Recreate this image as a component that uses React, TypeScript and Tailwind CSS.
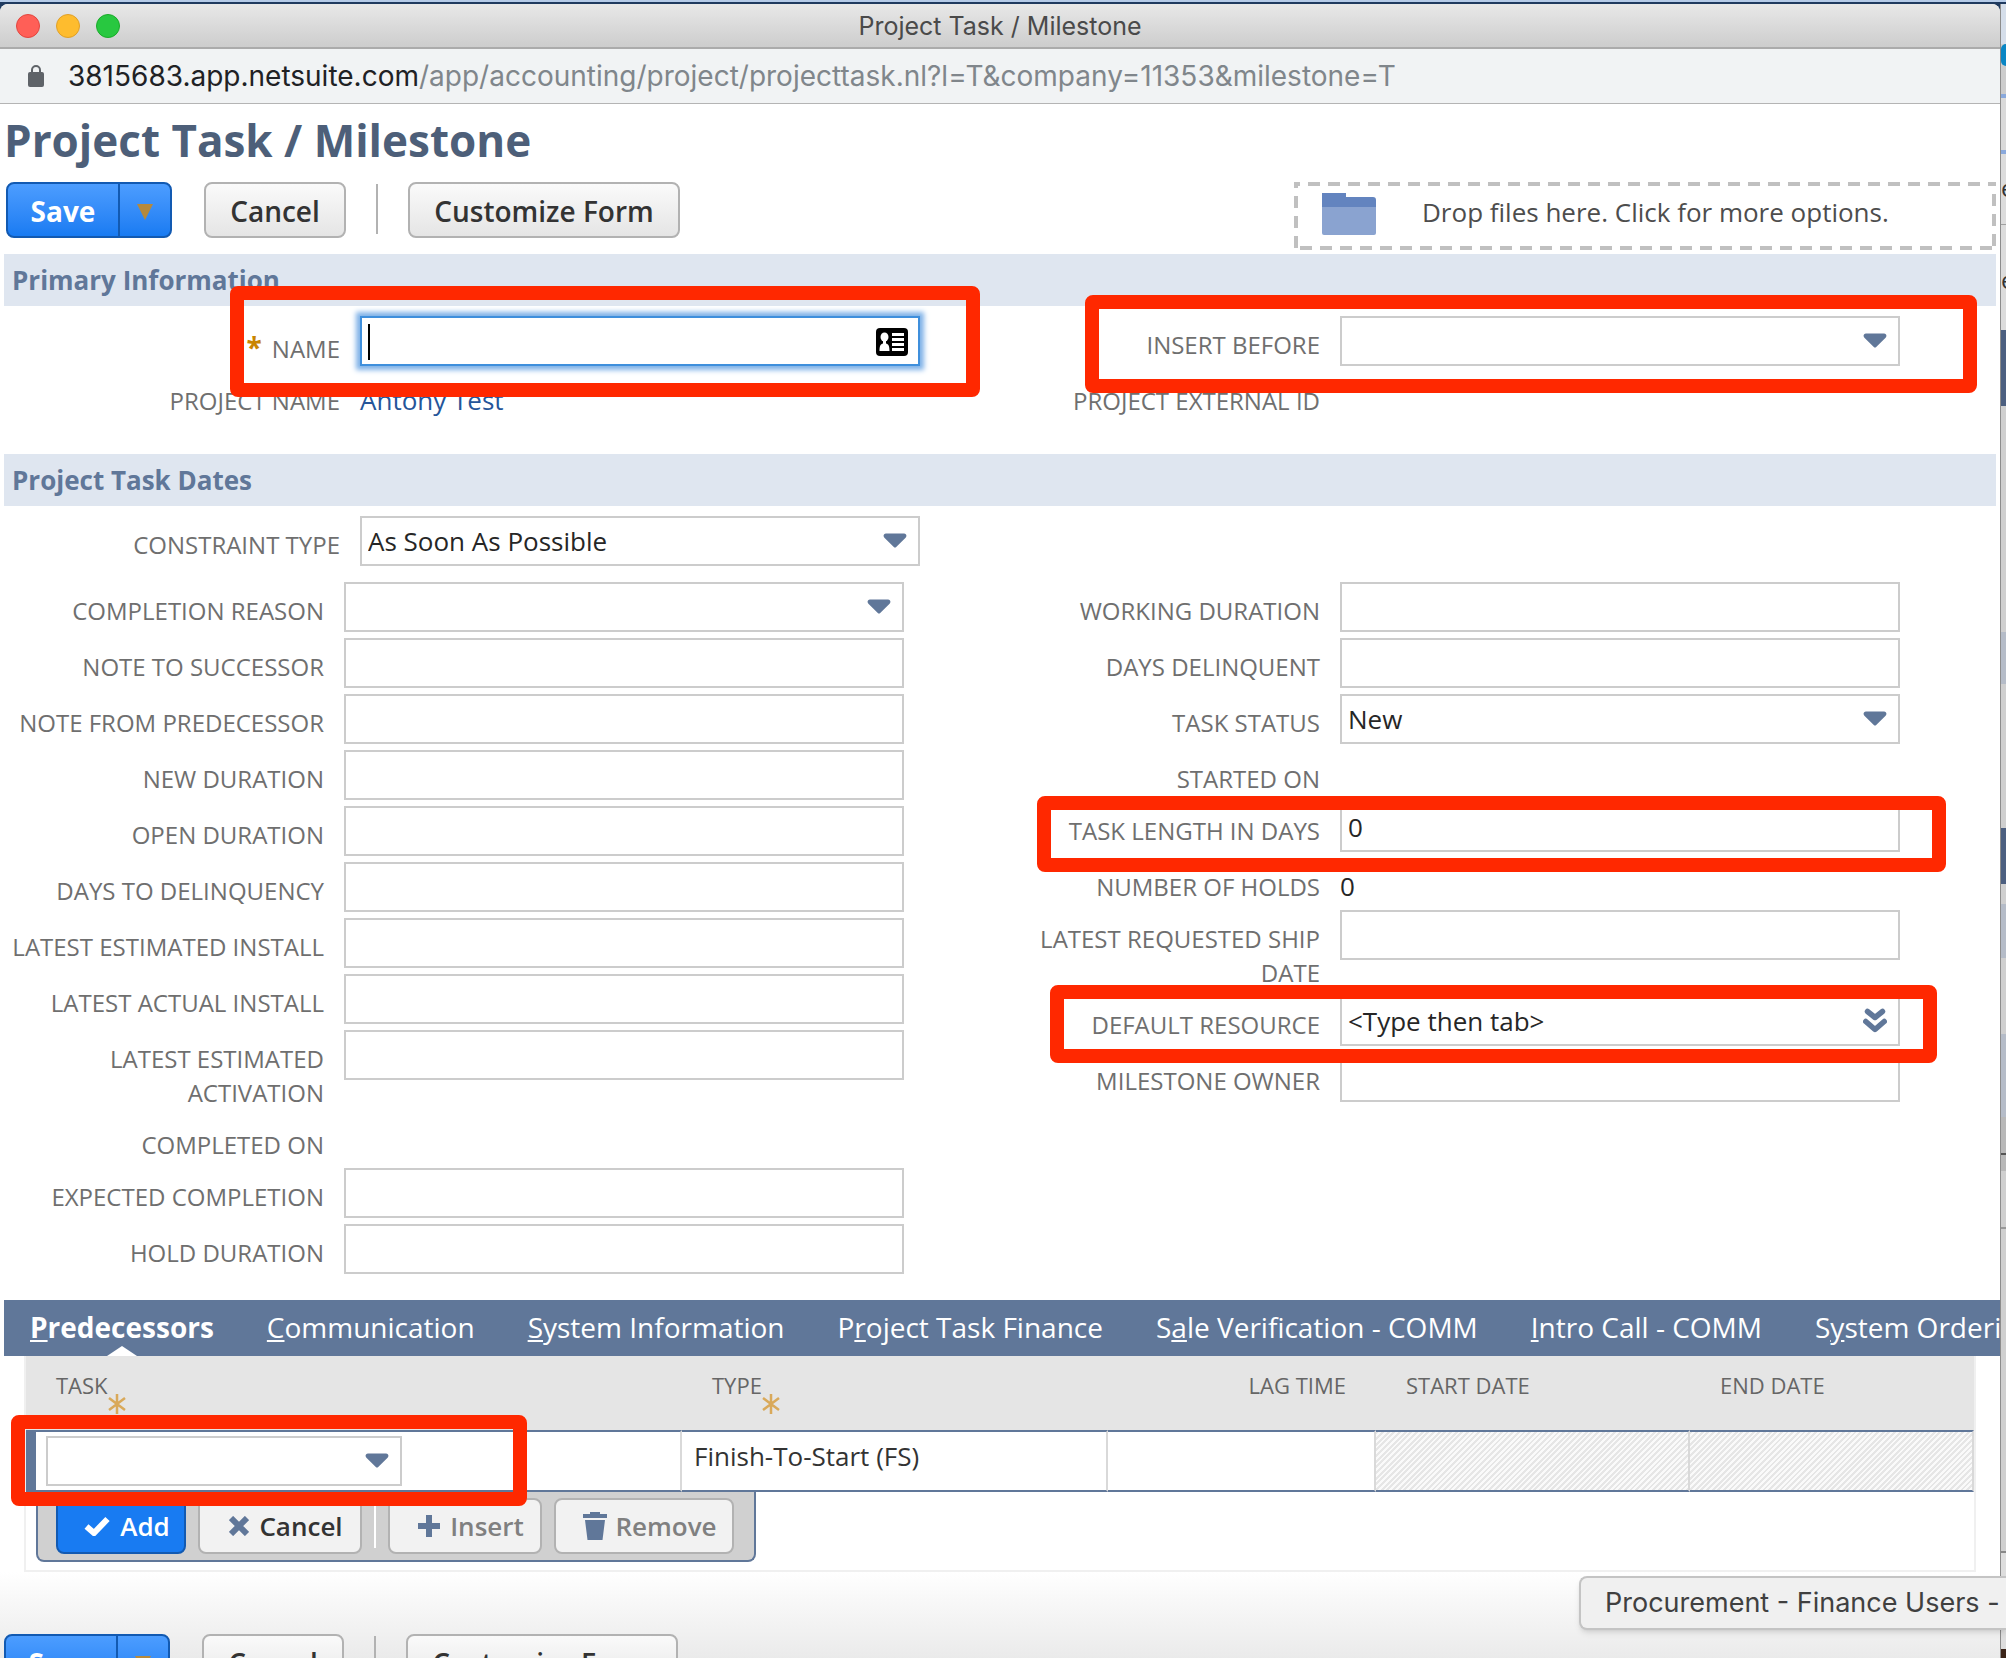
import { useId } from "react";
import type { ReactNode } from "react";

const MARK = "pointer-events-none absolute z-10 rounded-lg border-[14px] border-[#ff2800]";

function Caret({ className = "" }: { className?: string }) {
  return (
    <svg viewBox="0 0 24 15" className={`pointer-events-none absolute h-[15px] w-6 ${className}`} aria-hidden="true">
      <path d="M3 .5h18c2.4 0 3.2 2.6 1.6 4.2L13.2 14c-.7.7-1.7.7-2.4 0L1.4 4.700C-.2 3.100.6.5 3 .5z" fill="#607799" />
    </svg>
  );
}

function Chevrons() {
  return (
    <svg viewBox="0 0 24 26" className="pointer-events-none absolute right-[13px] top-3 h-[26px] w-6" aria-hidden="true">
      <path
        d="M4.500 3.500 12 9.500l7.500-6M2.800 13.500 12 21.500l9.200-8"
        fill="none"
        stroke="#607799"
        strokeWidth="5.500"
        strokeLinejoin="round"
        strokeLinecap="round"
      />
    </svg>
  );
}

type FieldProps = {
  label: string;
  kind?: "text" | "select" | "lookup" | "static" | "name";
  value?: ReactNode;
  mark?: string;
  labelWidth?: string;
  labelPad?: string;
};

const BOX = "h-[50px] w-full rounded-none border-2 border-[#ccc] bg-white px-1.5 text-[26px] text-[#262626] outline-none";

function Field({ label, kind = "text", value = "", mark, labelWidth = "w-80", labelPad = "pt-3" }: FieldProps) {
  const id = useId();
  const labelClass = `${labelWidth} ${labelPad} shrink-0 pl-2 text-right text-2xl leading-[34px] text-[#6f6f6f]`;
  return (
    <div className="relative flex items-start gap-5">
      {kind === "static" ? (
        <span className={labelClass}>{label}</span>
      ) : (
        <label htmlFor={id} className={labelClass}>
          {kind === "name" && <span className="mr-2.5 text-[28px] font-bold leading-none text-[#c98500]">*</span>}
          {label}
        </label>
      )}
      <div className="relative w-[560px]">
        {kind === "text" && <input id={id} type="text" defaultValue={String(value)} className={BOX} />}
        {kind === "select" && (
          <>
            <select id={id} className={`${BOX} appearance-none`} defaultValue={String(value)}>
              <option>{value}</option>
            </select>
            <Caret className="right-[13px] top-[17px]" />
          </>
        )}
        {kind === "lookup" && (
          <>
            <input id={id} type="text" defaultValue={String(value)} className={BOX} />
            <Chevrons />
          </>
        )}
        {kind === "static" && <span className="block pt-3 text-[26px] leading-[32px] text-[#262626]">{value}</span>}
        {kind === "name" && (
          <>
            <input
              id={id}
              type="text"
              className="h-[50px] w-full border-2 border-[#3f8fdc] bg-white px-1.5 text-[26px] caret-transparent shadow-[0_0_5px_4px_#7fb2e8] outline-none"
            />
            <span className="pointer-events-none absolute left-2 top-2 h-9 w-0.5 bg-black" />
            <svg viewBox="0 0 32 28" className="pointer-events-none absolute right-3 top-3 h-7 w-8" aria-hidden="true">
              <rect width="32" height="28" rx="4" fill="#000" />
              <ellipse cx="8.500" cy="9" rx="4" ry="4.500" fill="#fff" />
              <path d="M7 12h3v3.500c2.500.6 3.500 2.500 3.500 7.500h-10c0-5 1-6.900 3.500-7.500z" fill="#fff" />
              <path d="M16 6.500h12M16 11.500h12M16 16.500h12M16 21.500h12" stroke="#fff" strokeWidth="3" />
            </svg>
          </>
        )}
      </div>
      {mark && <div className={`${MARK} ${mark}`} />}
    </div>
  );
}

function SectionTitle({ children }: { children: ReactNode }) {
  return (
    <h2 className="mx-1 h-[52px] bg-[#dfe6f0] pl-2 text-[26px] font-bold leading-[52px] text-[#607799]">{children}</h2>
  );
}

const GREY_BUTTON =
  "h-14 rounded-lg border-2 border-[#b2b2b2] bg-linear-to-b from-[#fafafa] to-[#e5e5e5] pt-0.5 text-[28px] leading-none font-semibold text-[#333]";

function Actions() {
  return (
    <div className="flex items-start whitespace-nowrap">
      <div className="flex h-14 w-[166px] rounded-lg border-2 border-[#125ab2] bg-linear-to-b from-[#4c9dff] to-[#187bf2]">
        <button className="flex-1 pt-0.5 text-[28px] font-bold leading-none text-white">Save</button>
        <button className="flex w-[52px] items-center justify-center border-l-2 border-[#125ab2] pt-1" aria-label="More save options">
          <svg viewBox="0 0 16 16" className="size-4" aria-hidden="true">
            <path d="M0 0h16L8 16z" fill="#b5893c" />
          </svg>
        </button>
      </div>
      <button className={`${GREY_BUTTON} ml-8 w-[142px]`}>Cancel</button>
      <div className="ml-[30px] mt-0.5 h-[50px] w-0.5 bg-[#b2b2b2]" />
      <button className={`${GREY_BUTTON} ml-[30px] w-[272px]`}>Customize Form</button>
    </div>
  );
}

const TABS: [string, string, string][] = [
  ["", "C", "ommunication"],
  ["", "S", "ystem Information"],
  ["P", "r", "oject Task Finance"],
  ["S", "a", "le Verification - COMM"],
  ["", "I", "ntro Call - COMM"],
  ["S", "y", "stem Ordering"],
];

function Required() {
  return (
    <svg viewBox="0 0 18 20" className="absolute left-full top-6 h-5 w-[18px]" aria-hidden="true">
      <path d="M9 0v20M1 4l16 12M17 4 1 16" stroke="#d9a95a" strokeWidth="2.500" />
    </svg>
  );
}

const HATCH = "bg-[repeating-linear-gradient(135deg,#e6e6e6_0px,#e6e6e6_2px,#fafafa_2px,#fafafa_4px)]";
const TH = "align-top pt-3.5 font-normal text-[22px] leading-[30px] text-[#666]";
const TD = "h-[62px] border-y-2 border-y-[#607799] border-r-2 border-r-[#d9d9d9] p-0";
const ROW_BUTTON =
  "flex h-14 items-center justify-center rounded-lg border-2 pl-3 text-[26px] font-semibold leading-none";
const ROW_GREY = "border-[#b2b2b2] bg-[#f2f2f2]";

function Predecessors() {
  return (
    <div className="mx-6 border-2 border-t-0 border-[#f0f0f0] pb-2">
      <table className="w-full table-fixed border-separate border-spacing-0">
        <colgroup>
          <col className="w-[656px]" />
          <col className="w-[426px]" />
          <col className="w-[268px]" />
          <col className="w-[314px]" />
          <col />
        </colgroup>
        <thead>
          <tr className="h-[74px] bg-[#e5e5e5]">
            <th className={`${TH} pl-[30px] text-left`}>
              <span className="relative">TASK<Required /></span>
            </th>
            <th className={`${TH} pl-[30px] text-left`}>
              <span className="relative">TYPE<Required /></span>
            </th>
            <th className={`${TH} pr-[30px] text-right`}>LAG TIME</th>
            <th className={`${TH} pl-[30px] text-left`}>START DATE</th>
            <th className={`${TH} pl-[30px] text-left`}>END DATE</th>
          </tr>
        </thead>
        <tbody>
          <tr>
            <td className={`${TD} border-l-[10px] border-l-[#607799]`}>
              <div className="relative ml-2.5 w-[356px]">
                <select aria-label="Task" className={`${BOX} block appearance-none`} />
                <Caret className="right-[13px] top-[17px]" />
                <div className={`${MARK} -left-[35px] -top-[21px] h-[91px] w-[516px]`} />
              </div>
            </td>
            <td className={`${TD} pb-2.5 pl-3 text-[26px] text-[#333]`}>Finish-To-Start (FS)</td>
            <td className={TD} />
            <td className={`${TD} ${HATCH}`} />
            <td className={`${TD} ${HATCH}`} />
          </tr>
        </tbody>
      </table>
      <div className="ml-2.5 flex w-[720px] rounded-b-lg border-2 border-t-0 border-[#607799] bg-[#d0d0d0] pb-1.5 pl-[18px] pt-1.5">
        <button className={`${ROW_BUTTON} w-[130px] gap-2.5 border-[#125ab2] bg-[#187bf2] text-white`}>
          <svg viewBox="0 0 26 20" className="h-5 w-[26px]" aria-hidden="true">
            <path d="M2.500 10.500 10 17 23.500 3" fill="none" stroke="#fff" strokeWidth="6" />
          </svg>
          Add
        </button>
        <button className={`${ROW_BUTTON} ${ROW_GREY} ml-3 w-[164px] gap-2.5 text-[#333]`}>
          <svg viewBox="0 0 20 20" className="size-5" aria-hidden="true">
            <path d="m2 2 16 16M18 2 2 18" stroke="#607799" strokeWidth="6" />
          </svg>
          Cancel
        </button>
        <div className="ml-3 h-[50px] w-0.5 bg-white" />
        <button className={`${ROW_BUTTON} ${ROW_GREY} ml-3 w-[154px] gap-2.5 text-[#808080]`}>
          <svg viewBox="0 0 22 22" className="size-[22px]" aria-hidden="true">
            <path d="M11 0v22M0 11h22" stroke="#607799" strokeWidth="6" />
          </svg>
          Insert
        </button>
        <button className={`${ROW_BUTTON} ${ROW_GREY} ml-3 w-[180px] gap-2 text-[#808080]`}>
          <svg viewBox="0 0 24 28" className="h-7 w-6" aria-hidden="true">
            <path d="M7 0h10v2h7v4H0V2h7zM2 8h20l-2.500 20h-15z" fill="#607799" />
          </svg>
          Remove
        </button>
      </div>
    </div>
  );
}

/* Sliver of the page that lies behind the popup window. */
function Backdrop() {
  return (
    <aside className="flex w-1.5 shrink-0 flex-col overflow-hidden border-l border-[#8c8c8c] bg-[#cfcfcf] text-2xl leading-6 text-[#333] *:shrink-0">
      <div className="h-10 bg-[#d5deea]" />
      <div className="h-[22px] rounded-l-full bg-[#0a86c4]" />
      <div className="h-7 bg-[#ccc]" />
      <div className="h-1 bg-[#8aa9dc]" />
      <div className="h-[52px] bg-[#dadada]" />
      <div className="h-1 bg-[#8aa9dc]" />
      <div className="h-[71px] border-b border-[#a0a0a0] bg-[#dcdcdc] pt-[22px]">e</div>
      <div className="h-[105px] bg-[#dcdcdc] pt-[43px]">e</div>
      <div className="h-[76px] bg-[#4c5f80]" />
      <div className="h-[226px]" />
      <div className="h-[52px] bg-[#b5bcc8]" />
      <div className="h-36" />
      <div className="h-14 bg-[#4c5f80]" />
      <div className="h-5" />
      <div className="h-[54px] bg-[#b5bcc8]" />
      <div className="h-[76px]" />
      <div className="h-[83px] bg-[#b5bcc8]" />
      <div className="h-9 bg-[#b8b8b8]" />
      <div className="h-0.5 bg-[#555]" />
      <div className="h-4 bg-[#b8b8b8]" />
      <div className="h-14" />
      <div className="h-0.5 bg-[#999]" />
      <div className="h-[322px]" />
      <div className="h-0.5 bg-[#888]" />
      <div className="h-24 bg-[#ddd]" />
      <div className="h-4 bg-[#3b2418]" />
    </aside>
  );
}

export default function App() {
  return (
    <div className="relative flex h-screen overflow-hidden bg-[#1f3a5f] pt-1 font-['Open_Sans',sans-serif]">
      <div className="absolute inset-x-0 top-0 h-0.5 bg-[#b5cbe8]" />
      <div className="flex min-w-0 flex-1 flex-col overflow-hidden rounded-t-lg bg-white">
        <header className="flex h-[45px] shrink-0 items-center border-b-2 border-[#ababab] bg-linear-to-b from-[#e8e8e8] to-[#cdcdcd] px-4 font-[Inter,sans-serif]">
          <div className="flex w-[104px] gap-4">
            <span className="size-6 rounded-full border border-[#e2463f] bg-[#ff5f57]" />
            <span className="size-6 rounded-full border border-[#e0a028] bg-[#febc2e]" />
            <span className="size-6 rounded-full border border-[#1aab29] bg-[#28c840]" />
          </div>
          <div className="flex-1 pr-[104px] pt-0.5 text-center text-[25px] text-[#4a4a4a]">Project Task / Milestone</div>
        </header>
        <div className="flex h-[55px] shrink-0 items-center border-b border-[#b4b4b4] bg-[#f1f3f4] pl-7 font-[Inter,sans-serif] text-[28px] text-[#80868b]">
          <svg viewBox="0 0 16 22" className="h-[22px] w-4" aria-hidden="true">
            <rect y="7" width="16" height="15" rx="2" fill="#5f6368" />
            <path d="M4 8V5a4 4 0 0 1 8 0v3" fill="none" stroke="#5f6368" strokeWidth="2" />
          </svg>
          <span className="ml-6 text-[#202124]">3815683.app.netsuite.com</span>
          <span>/app/accounting/project/projecttask.nl?l=T&amp;company=11353&amp;milestone=T</span>
        </div>
        <main className="min-h-0 flex-1 overflow-hidden">
          <h1 className="mb-3 ml-1 mt-1.5 text-[44px] font-bold leading-[60px] text-[#4d5f79]">Project Task / Milestone</h1>
          <div className="mb-1 flex justify-between pl-1.5 pr-1">
            <Actions />
            <button className="relative flex h-[68px] w-[702px] items-center pb-2 pl-7 text-left text-[26px] text-[#4d4d4d]">
              <svg className="absolute inset-0 size-full" aria-hidden="true">
                <rect width="100%" height="100%" fill="none" stroke="#c0c0c0" strokeWidth="8" strokeDasharray="12 8" strokeDashoffset="6" />
              </svg>
              <svg viewBox="0 0 54 42" className="mr-[46px] mt-1 h-[42px] w-[54px]" aria-hidden="true">
                <path d="M0 0h24v4h27a3 3 0 0 1 3 3v30H0z" fill="#6384bf" />
                <path d="M0 14h54v26a2 2 0 0 1-2 2H2a2 2 0 0 1-2-2z" fill="#8aa3d0" />
              </svg>
              Drop files here. Click for more options.
            </button>
          </div>

          <SectionTitle>Primary Information</SectionTitle>
          <div className="grid grid-cols-2 pb-9 pt-2.5">
            <div className="flex flex-col gap-1.5">
              <Field label="NAME" kind="name" labelWidth="w-[340px]" labelPad="pt-4" mark="-top-[30px] left-[230px] h-[111px] w-[750px]" />
              <Field
                label="PROJECT NAME"
                kind="static"
                labelWidth="w-[340px]"
                value={<a href="#project" className="text-[#255599]">Antony Test</a>}
              />
            </div>
            <div className="flex flex-col gap-1.5">
              <Field label="INSERT BEFORE" kind="select" mark="-top-[21px] left-[85px] h-[98px] w-[892px]" />
              <Field label="PROJECT EXTERNAL ID" kind="static" />
            </div>
          </div>

          <SectionTitle>Project Task Dates</SectionTitle>
          <div className="pb-4 pt-2.5">
            <Field label="CONSTRAINT TYPE" kind="select" value="As Soon As Possible" labelWidth="w-[340px]" />
          </div>
          <div className="grid grid-cols-2 pb-[26px]">
            <div className="flex flex-col gap-1.5">
              <Field label="COMPLETION REASON" kind="select" labelWidth="w-[324px]" />
              <Field label="NOTE TO SUCCESSOR" labelWidth="w-[324px]" />
              <Field label="NOTE FROM PREDECESSOR" labelWidth="w-[324px]" />
              <Field label="NEW DURATION" labelWidth="w-[324px]" />
              <Field label="OPEN DURATION" labelWidth="w-[324px]" />
              <Field label="DAYS TO DELINQUENCY" labelWidth="w-[324px]" />
              <Field label="LATEST ESTIMATED INSTALL" labelWidth="w-[324px]" />
              <Field label="LATEST ACTUAL INSTALL" labelWidth="w-[324px]" />
              <Field label="LATEST ESTIMATED ACTIVATION" labelWidth="w-[324px]" />
              <Field label="COMPLETED ON" kind="static" labelWidth="w-[324px]" />
              <Field label="EXPECTED COMPLETION" labelWidth="w-[324px]" />
              <Field label="HOLD DURATION" labelWidth="w-[324px]" />
            </div>
            <div className="flex flex-col gap-1.5">
              <Field label="WORKING DURATION" />
              <Field label="DAYS DELINQUENT" />
              <Field label="TASK STATUS" kind="select" value="New" />
              <Field label="STARTED ON" kind="static" />
              <Field label="TASK LENGTH IN DAYS" value="0" mark="-top-1.5 left-[37px] h-[76px] w-[909px]" />
              <Field label="NUMBER OF HOLDS" kind="static" value="0" />
              <Field label="LATEST REQUESTED SHIP DATE" />
              <Field label="DEFAULT RESOURCE" kind="lookup" value="<Type then tab>" mark="-top-[11px] left-[50px] h-[78px] w-[887px]" />
              <Field label="MILESTONE OWNER" />
            </div>
          </div>

          <nav className="ml-1 flex h-14 items-center gap-[53px] overflow-hidden whitespace-nowrap bg-[#607799] pl-[26px] text-[28px] leading-[54px] text-white">
            <a href="#predecessors" className="relative h-14 font-bold">
              <span className="underline">P</span>redecessors
              <svg viewBox="0 0 30 10" className="absolute bottom-0 left-1/2 h-2.5 w-[30px] -translate-x-1/2" aria-hidden="true">
                <path d="M0 10 15 0l15 10z" fill="#fff" />
              </svg>
            </a>
            {TABS.map(([before, key, after]) => (
              <a key={after} href="#tab" className="h-14">
                {before}<span className="underline">{key}</span>{after}
              </a>
            ))}
          </nav>
          <Predecessors />
          <div className="h-24 bg-linear-to-b from-white to-[#e8e8e8] pl-1 pt-[62px]">
            <Actions />
          </div>
        </main>
      </div>
      <Backdrop />
      <div className="absolute bottom-7 right-0 h-[54px] w-[427px] overflow-hidden whitespace-nowrap rounded-l-lg border-2 border-r-0 border-[#c4c4c4] bg-[#f0f0f0] pl-6 font-[Inter,sans-serif] text-[27px] leading-[50px] text-[#404040] shadow-md">
        Procurement - Finance Users -
      </div>
    </div>
  );
}
